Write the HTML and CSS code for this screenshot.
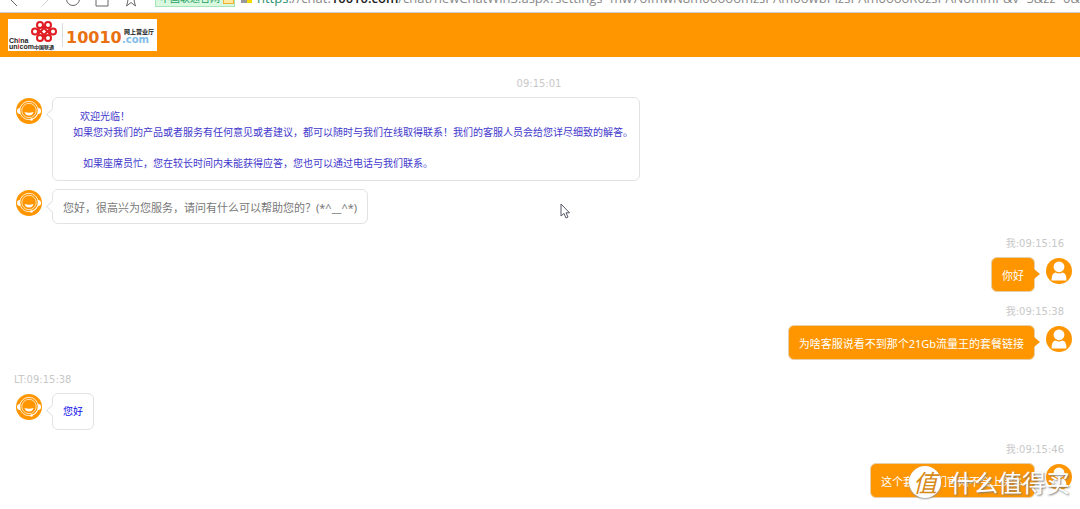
FILE: index.html
```html
<!DOCTYPE html>
<html lang="zh-CN">
<head>
<meta charset="utf-8">
<title>在线客服</title>
<link rel="stylesheet" href="styles.css">
</head>
<body>
<svg class="defs" aria-hidden="true">
  <symbol id="agent" viewBox="0 0 26 26">
    <circle cx="13" cy="13" r="13" fill="#ff9600"/>
    <circle cx="13" cy="12.5" r="9.2" fill="none" stroke="#fff" stroke-width="0.8"/>
    <circle cx="13" cy="12.5" r="7.2" fill="none" stroke="#fff" stroke-width="0.7"/>
    <path d="M4 10Q1 10 1 13T4 16ZM22 10Q25 10 25 13T22 16Z" fill="#fff"/>
    <path d="M8.500 14Q13 15.500 17.500 14Q16.500 17.500 13 17.500T8.500 14Z" fill="#fff"/>
    <path d="M22 16Q20 20.500 15.500 21.500" fill="none" stroke="#fff" stroke-width="0.8"/>
    <circle cx="15.500" cy="21.500" r="1.200" fill="#fff"/>
  </symbol>
  <symbol id="user" viewBox="0 0 26 26">
    <circle cx="13" cy="13" r="13" fill="#ff9600"/>
    <circle cx="13" cy="8.800" r="5.400" fill="#fff"/>
    <path d="M5.500 22.500Q5.500 15 9.500 14.500Q13 16.500 16.500 14.500Q20.500 15 20.500 22.500Z" fill="#fff"/>
  </symbol>
</svg>
<div class="browser">
  <nav class="tools" aria-label="浏览器">
    <svg class="tool" viewBox="0 0 16 16"><path d="M10 1L3 8L10 15"/></svg>
    <svg class="tool pale" viewBox="0 0 16 16"><path d="M6 1L13 8L6 15"/></svg>
    <svg class="tool" viewBox="0 0 16 16"><circle cx="8" cy="8" r="6.500"/></svg>
    <svg class="tool" viewBox="0 0 16 16"><path d="M2 7V15H14V7L8 1Z"/></svg>
    <svg class="tool" viewBox="0 0 16 16"><path d="M8 1L10 6H15L11 9.500L12.500 15L8 11.500L3.500 15L5 9.500L1 6H6Z"/></svg>
  </nav>
  <span class="badge">中国联通官网<i class="cert"></i></span>
  <span class="shield"></span>
  <span class="url"><span class="secure">https</span>://chat.<b>10010.com</b>/chat/newChatWin3.aspx?settings=mw7oImwN8m0oooomzsPAm0owbPIzsPAm0oooRozsPANommP&amp;v=5&amp;zz=0&amp;res=1080</span>
</div>
<header class="header">
  <svg class="logo" viewBox="0 0 149 32" role="img" aria-label="中国联通 10010.com">
    <rect width="149" height="32" fill="#fff"/>
    <g fill="none" stroke="#e01b22" stroke-width="2">
      <circle cx="32" cy="6" r="3"/><circle cx="40" cy="6" r="3"/>
      <circle cx="27" cy="12.500" r="3"/><circle cx="45" cy="12.500" r="3"/>
      <circle cx="32" cy="19" r="3"/><circle cx="40" cy="19" r="3"/>
      <path d="M30 15L38 7M34 7L42 15M30 10L38 18M34 18L42 10"/>
    </g>
    <text class="logo-en" x="1" y="24">Ch<tspan fill="#e01b22">i</tspan>na</text>
    <text class="logo-en" x="1" y="30">un<tspan fill="#e01b22">i</tspan>com</text>
    <text class="logo-cn" x="26" y="30">中国联通</text>
    <path d="M54.500 4V28" stroke="#ddd"/>
    <text class="logo-num" x="58" y="24">10010</text>
    <text class="logo-hall" x="116" y="15">网上营业厅</text>
    <text class="logo-com" x="114" y="24">.com</text>
  </svg>
</header>
<main class="chat">
  <time class="time center">09:15:01</time>
  <div class="row">
    <svg class="avatar"><use href="#agent"/></svg>
    <div class="bubble welcome">
      <p class="first">欢迎光临！</p>
      <p>如果您对我们的产品或者服务有任何意见或者建议，都可以随时与我们在线取得联系！我们的客服人员会给您详尽细致的解答。</p>
      <p class="last">如果座席员忙，您在较长时间内未能获得应答，您也可以通过电话与我们联系。</p>
    </div>
  </div>
  <div class="row">
    <svg class="avatar"><use href="#agent"/></svg>
    <div class="bubble">您好，很高兴为您服务，请问有什么可以帮助您的？(*^__^*)</div>
  </div>
  <time class="time right">我:09:15:16</time>
  <div class="row mine">
    <div class="bubble">你好</div>
    <svg class="avatar"><use href="#user"/></svg>
  </div>
  <time class="time right">我:09:15:38</time>
  <div class="row mine">
    <div class="bubble">为啥客服说看不到那个21Gb流量王的套餐链接</div>
    <svg class="avatar"><use href="#user"/></svg>
  </div>
  <time class="time">LT:09:15:38</time>
  <div class="row">
    <svg class="avatar"><use href="#agent"/></svg>
    <div class="bubble reply">您好</div>
  </div>
  <time class="time right">我:09:15:46</time>
  <div class="row mine">
    <div class="bubble">这个套餐你们官网不会上架么</div>
    <svg class="avatar"><use href="#user"/></svg>
  </div>
</main>
<svg class="cursor" viewBox="0 0 10 16"><path d="M1 1V13L4 10.500L6 15L8 14L6 9.800H9.500Z" fill="#fff" stroke="#555566"/></svg>
<div class="watermark"><span class="seal">值</span><span>什么值得买</span></div>
</body>
</html>
```
FILE: styles.css
```css
* { box-sizing: border-box; }
body {
  margin: 0;
  position: relative;
  overflow: hidden;
  background: #fff;
  color: #777;
  font: 11px/17px "Noto Sans", "Noto Sans CJK SC", sans-serif;
}
p { margin: 0; }
.defs { position: absolute; width: 0; height: 0; }
.browser {
  display: flex;
  align-items: flex-end;
  height: 13px;
  padding-bottom: 5px;
  border-bottom: 1px solid #ccc;
  overflow: hidden;
  white-space: nowrap;
}
.tools { display: flex; gap: 13px; padding-left: 7px; width: 155px; flex: none; }
.tool { width: 16px; height: 16px; fill: none; stroke: #666; }
.pale { stroke: #ccc; }
.badge {
  display: flex;
  align-items: center;
  gap: 3px;
  width: 80px;
  flex: none;
  height: 18px;
  padding-left: 4px;
  border: 1px solid #a5e5b5;
  background: #d8f8df;
  color: #20a060;
  font-size: 10px;
}
.cert { width: 12px; height: 12px; border: 1px solid #f0b030; background: #ffe9a0; }
.shield { flex: none; width: 11px; height: 14px; margin: 0 5px 4px 6px; background: linear-gradient(90deg, #999 50%, #f5d800 50%); }
.url { color: #888; font: 13px/18px "Open Sans", sans-serif; }
.url b { color: #222; font-weight: 600; }
.secure { color: #289070; }
.header { display: flex; align-items: center; height: 44px; padding-left: 8px; background: #ff9600; }
.logo { width: 149px; height: 32px; }
.logo-en { font: bold 7px "Liberation Sans", sans-serif; fill: #222; }
.logo-cn { font: bold 5px "Noto Sans CJK SC", sans-serif; fill: #222; }
.logo-num { font: bold 16px "DejaVu Sans", sans-serif; fill: #e87010; }
.logo-hall { font: bold 6px "Noto Sans CJK SC", sans-serif; fill: #222; }
.logo-com { font: bold 10px "DejaVu Sans", sans-serif; fill: #80bce8; }
.chat { display: flex; flex-direction: column; padding: 7px 8px 12px 16px; }
.time {
  margin: 13px 0 6px -2px;
  color: #c8c8c8;
  font: 10px/14px "DejaVu Sans", "Noto Sans CJK SC", sans-serif;
}
.center { text-align: center; margin-right: 8px; }
.right { text-align: right; margin-right: 8px; }
.row { display: flex; align-items: flex-start; gap: 10px; }
.row + .row { margin-top: 8px; }
.mine { justify-content: flex-end; gap: 11px; }
.avatar { width: 26px; height: 26px; margin-top: 1px; flex: none; }
.bubble {
  position: relative;
  padding: 9px 10px 7px;
  border: 1px solid #e2e2e2;
  border-radius: 6px;
}
.bubble::before {
  content: "";
  position: absolute;
  left: -5px;
  top: 12px;
  width: 8px;
  height: 8px;
  border: solid #e2e2e2;
  border-width: 0 0 1px 1px;
  background: #fff;
  transform: rotate(45deg);
}
.mine .bubble { background: #ff9600; border-color: #e6cfaa; color: #fff; }
.mine .bubble::before {
  left: auto;
  right: -6px;
  top: 11px;
  width: 0;
  height: 0;
  border: solid transparent;
  border-width: 5px 0 5px 6px;
  border-left-color: #ff9600;
  background: none;
  transform: none;
}
.welcome { padding: 10px 6px 9px 20px; color: #4238cc; font-size: 10px; line-height: 16px; }
.first { padding-left: 7px; }
.last { padding: 15px 0 0 10px; }
.reply { color: #1010ee; font-size: 10px; padding: 9px 10px; }
.cursor { position: absolute; left: 560px; top: 203px; width: 10px; height: 16px; }
.watermark {
  position: absolute;
  right: 10px;
  bottom: 11px;
  display: flex;
  align-items: center;
  gap: 9px;
  color: #fff;
  font: 24px/34px "Noto Sans CJK SC", sans-serif;
  text-shadow: 1px 1px 2px #777;
}
.seal {
  width: 32px;
  height: 32px;
  border-radius: 50%;
  background: #fff;
  color: #d88a18;
  text-align: center;
  font-style: italic;
  line-height: 31px;
  text-shadow: none;
  box-shadow: 0 1px 2px #999;
}
```
